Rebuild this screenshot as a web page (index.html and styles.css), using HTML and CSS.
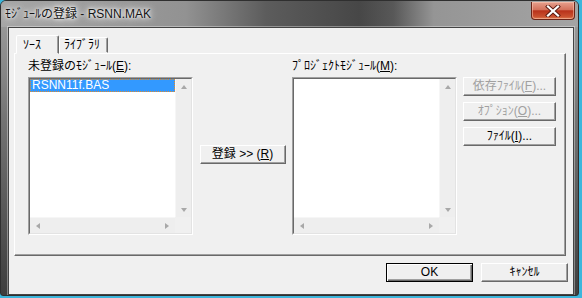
FILE: index.html
```html
<!DOCTYPE html>
<html lang="ja">
<head>
    <meta charset="UTF-8">
    <title>ﾓｼﾞｭｰﾙの登録 - RSNN.MAK</title>
    <link rel="stylesheet" href="styles.css">
</head>
<body>
    <div class="window">
        <div class="titlebar">
            <span class="title">ﾓｼﾞｭｰﾙの登録 - RSNN.MAK</span>
            <button class="close-btn">
                <svg width="16" height="12" viewBox="0 0 16 12">
                    <path d="M3 1.5 L13 10.5 M13 1.5 L3 10.5" stroke="#5a1a10" stroke-width="4" stroke-linecap="square"/>
                    <path d="M3 1.5 L13 10.5 M13 1.5 L3 10.5" stroke="#fff" stroke-width="2.2" stroke-linecap="square"/>
                </svg>
            </button>
        </div>

        <div class="client">
            <div class="tabs">
                <div class="tab active">ｿｰｽ</div>
                <div class="tab">ﾗｲﾌﾞﾗﾘ</div>
            </div>

            <div class="panel">
                <div class="column">
                    <div class="label">未登録のﾓｼﾞｭｰﾙ(<u>E</u>):</div>
                    <div class="listbox">
                        <div class="list-inner">
                            <div class="items">
                                <div class="item selected">RSNN11f.BAS</div>
                            </div>
                            <div class="vscroll">
                                <span class="arrow up"></span>
                                <span class="arrow down"></span>
                            </div>
                            <div class="hscroll">
                                <span class="arrow left"></span>
                                <span class="arrow right"></span>
                            </div>
                            <div class="corner"></div>
                        </div>
                    </div>
                </div>

                <div class="middle">
                    <button class="btn add-btn">登録 &gt;&gt; (<u>R</u>)</button>
                </div>

                <div class="column">
                    <div class="label">ﾌﾟﾛｼﾞｪｸﾄﾓｼﾞｭｰﾙ(<u>M</u>):</div>
                    <div class="listbox">
                        <div class="list-inner">
                            <div class="items"></div>
                            <div class="vscroll">
                                <span class="arrow up"></span>
                                <span class="arrow down"></span>
                            </div>
                            <div class="hscroll">
                                <span class="arrow left"></span>
                                <span class="arrow right"></span>
                            </div>
                            <div class="corner"></div>
                        </div>
                    </div>
                </div>

                <div class="side-buttons">
                    <button class="btn" disabled>依存ﾌｧｲﾙ(<u>F</u>)...</button>
                    <button class="btn" disabled>ｵﾌﾟｼｮﾝ(<u>O</u>)...</button>
                    <button class="btn">ﾌｧｲﾙ(<u>I</u>)...</button>
                </div>
            </div>

            <div class="footer">
                <button class="btn default">OK</button>
                <button class="btn">ｷｬﾝｾﾙ</button>
            </div>
        </div>
    </div>
</body>
</html>
```

FILE: styles.css
```css
* {
    box-sizing: border-box;
}
body {
    margin: 0;
    background: #3cb6dc;
    font-family: "Liberation Sans", "Noto Sans CJK JP", sans-serif;
    font-size: 12px;
    color: #000;
}
.window {
    width: 579px;
    height: 296px;
    display: flex;
    flex-direction: column;
    border: 1px solid #2f2f2f;
    border-radius: 6px 6px 3px 3px;
    background: linear-gradient(180deg, #a2a2a2 0, #747474 40%, #3e3e3e 100%);
    overflow: hidden;
}
.titlebar {
    height: 26px;
    display: flex;
    align-items: flex-start;
    padding-left: 4px;
    background: linear-gradient(90deg, #a6a6a6 0, #929292 32%, #5c5c5c 46%, #474747 62%, #585858 68%, #959595 75%, #a4a4a4 100%);
}
.title {
    padding-top: 5px;
    line-height: 16px;
    color: #141414;
    text-shadow: 0 0 6px #fff, 0 0 10px rgba(255, 255, 255, 0.9), 0 0 3px #fff;
}
.close-btn {
    margin-left: auto;
    margin-right: 3px;
    margin-top: 1px;
    width: 44px;
    height: 18px;
    padding: 0;
    display: flex;
    align-items: center;
    justify-content: center;
    border: 1px solid #6a2418;
    border-top: none;
    border-radius: 0 0 4px 4px;
    background: linear-gradient(180deg, #e6a08e 0, #d4725c 45%, #b8321b 52%, #c9502f 85%, #dc7a50 100%);
    box-shadow: inset 0 0 0 1px rgba(255, 210, 190, 0.5);
}
.client {
    flex: 1;
    margin: 0 4px 0 7px;
    display: flex;
    flex-direction: column;
    padding: 7px 6px 0 5px;
    background: #f0f0f0;
    border: 1px solid #444;
    box-shadow: 0 0 0 1px rgba(255, 255, 255, 0.35);
}

/* tabs */
.tabs {
    display: flex;
    align-items: flex-end;
    height: 18px;
    padding-left: 2px;
}
.tab {
    height: 16px;
    padding: 0 5px;
    line-height: 15px;
    background: #f0f0f0;
    border: 1px solid;
    border-color: #fff #696969 transparent #fff;
    box-shadow: inset -1px 0 0 #a0a0a0;
    border-radius: 2px 2px 0 0;
}
.tab.active {
    width: 43px;
    height: 19px;
    margin-bottom: -1px;
    line-height: 18px;
    padding-left: 6px;
    position: relative;
    z-index: 1;
}
.tabs .tab:not(.active) {
    width: 49px;
    padding-left: 4px;
}
.panel {
    height: 203px;
    margin-right: 1px;
    display: flex;
    padding: 6px 0 0 13px;
    border: 1px solid;
    border-color: #fff #696969 #696969 #fff;
    box-shadow: inset -1px -1px 0 #a0a0a0;
}
.column {
    width: 165px;
}
.label {
    height: 13px;
    line-height: 13px;
    margin-bottom: 4px;
    white-space: nowrap;
}

/* list boxes */
.listbox {
    height: 158px;
    border: 1px solid;
    border-color: #a0a0a0 #fff #fff #a0a0a0;
}
.list-inner {
    height: 100%;
    display: grid;
    grid-template-columns: 1fr 16px;
    grid-template-rows: 1fr 16px;
    border: 1px solid;
    border-color: #696969 #e3e3e3 #e3e3e3 #696969;
    background: #fff;
}
.items {
    overflow: hidden;
}
.item {
    height: 13px;
    line-height: 13px;
    padding-left: 2px;
}
.item.selected {
    background: #3399ff;
    color: #fff;
    outline: 1px dotted #e08a2c;
    outline-offset: -1px;
}
.vscroll {
    display: flex;
    flex-direction: column;
    justify-content: space-between;
    align-items: center;
    padding: 6px 0 5px;
    background: #eeeeee;
    border-left: 1px solid #f6f6f6;
}
.hscroll {
    display: flex;
    justify-content: space-between;
    align-items: center;
    padding: 0 6px;
    background: #eeeeee;
    border-top: 1px solid #f6f6f6;
}
.corner {
    background: #f0f0f0;
}
.arrow {
    width: 0;
    height: 0;
    border: 3px solid transparent;
}
.arrow.up {
    border-bottom: 4px solid #a8a8a8;
    border-top: 0;
}
.arrow.down {
    border-top: 4px solid #a8a8a8;
    border-bottom: 0;
}
.arrow.left {
    border-right: 4px solid #a8a8a8;
    border-left: 0;
}
.arrow.right {
    border-left: 4px solid #a8a8a8;
    border-right: 0;
}

/* buttons */
.btn {
    height: 19px;
    padding: 0;
    font-family: inherit;
    font-size: 12px;
    line-height: 15px;
    color: #000;
    background: #f0f0f0;
    border: 1px solid;
    border-color: #fff #696969 #696969 #fff;
    box-shadow: inset -1px -1px 0 #a0a0a0;
    white-space: nowrap;
}
.btn:disabled {
    color: #a0a0a0;
}
.btn.default {
    border-color: #000;
    box-shadow: inset 1px 1px 0 #fff, inset -1px -1px 0 #696969, inset -2px -2px 0 #a0a0a0;
}
.middle {
    width: 99px;
    display: flex;
    justify-content: center;
    align-items: flex-start;
    padding-top: 85px;
}
.add-btn {
    width: 86px;
}
.side-buttons {
    width: 93px;
    margin-left: 6px;
    padding-top: 17px;
    display: flex;
    flex-direction: column;
    gap: 6px;
}
.footer {
    display: flex;
    justify-content: flex-end;
    gap: 8px;
    margin-top: 7px;
    margin-right: -1px;
}
.footer .btn {
    width: 87px;
}
```
